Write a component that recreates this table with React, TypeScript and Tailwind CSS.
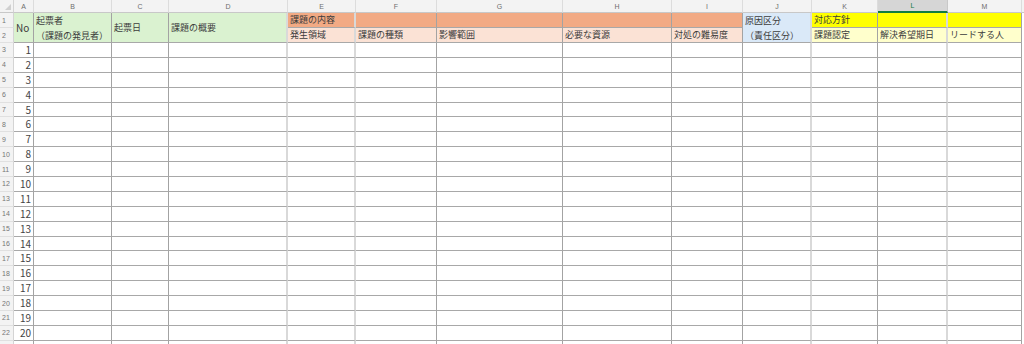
import React from 'react';

type Col = { id: string; line: string };

const DARK = 'border-r border-r-[#a3a3a3]';
const LIGHT = 'border-r-2 border-r-[#d9d9d9]';

const cols: Col[] = [
  { id: 'A', line: DARK },
  { id: 'B', line: DARK },
  { id: 'C', line: DARK },
  { id: 'D', line: LIGHT },
  { id: 'E', line: LIGHT },
  { id: 'F', line: DARK },
  { id: 'G', line: DARK },
  { id: 'H', line: DARK },
  { id: 'I', line: DARK },
  { id: 'J', line: LIGHT },
  { id: 'K', line: DARK },
  { id: 'L', line: LIGHT },
  { id: 'M', line: DARK },
];

const colLine = (id: string) => cols.find(c => c.id === id)!.line;

const RowHead = ({ n }: { n?: number }) => (
  <div className="bg-[#f3f3f3] border-r border-r-[#d4d4d4] border-b border-b-[#e0e0e0] flex items-center pl-[2px] text-[7px] text-[#767676] font-['Liberation_Sans',sans-serif] leading-none">
    {n}
  </div>
);

const Cell = ({ id, className = '', children }: { id: string; className?: string; children?: React.ReactNode }) => (
  <div className={`${colLine(id)} border-b border-b-[#a8a8a8] ${className}`}>{children}</div>
);

const App: React.FC = () => {
  const body = Array.from({ length: 21 }, (_, i) => i);

  return (
    <div className="w-[1024px] h-[344px] overflow-hidden bg-white font-['Noto_Sans_CJK_JP',sans-serif] text-[9px] text-[#3c3c3c]">
      <div className="grid grid-cols-[14px_20px_78px_57px_119px_68px_81px_126px_109px_71px_69px_66px_70px_74px_2px] grid-rows-[13px_15px_15px_repeat(21,14.9px)]">
        {/* column letters */}
        <div className="bg-[#f3f3f3] border-r border-r-[#d4d4d4] border-b border-b-[#c8c8c8] relative">
          <div className="absolute right-[2px] bottom-[2px] w-0 h-0 border-l-[6px] border-l-transparent border-b-[6px] border-b-[#d0d0d0]" />
        </div>
        {cols.map(c =>
          c.id === 'L' ? (
            <div key={c.id} className="bg-[#d6d6d6] border-r border-r-[#c8c8c8] border-b-2 border-b-[#107c41] flex items-center justify-center text-[7px] text-[#107c41] font-['Liberation_Sans',sans-serif] leading-none">
              {c.id}
            </div>
          ) : (
            <div key={c.id} className="bg-[#f3f3f3] border-r border-r-[#dcdcdc] border-b border-b-[#c8c8c8] flex items-center justify-center text-[7px] text-[#6e6e6e] font-['Liberation_Sans',sans-serif] leading-none">
              {c.id}
            </div>
          )
        )}
        <div className="bg-[#f3f3f3] border-b border-b-[#c8c8c8]" />

        {/* row 1 */}
        <RowHead n={1} />
        <Cell id="A" className="row-span-2 bg-[#daf2d0] flex items-center pl-[2px] text-[10px]">No</Cell>
        <Cell id="B" className="row-span-2 bg-[#daf2d0] flex flex-col leading-[15px] pl-[2px]">
          <span>起票者</span>
          <span>（課題の発見者）</span>
        </Cell>
        <Cell id="C" className="row-span-2 bg-[#daf2d0] flex items-center pl-[2px]">起票日</Cell>
        <Cell id="D" className="row-span-2 bg-[#daf2d0] flex items-center pl-[2px]">課題の概要</Cell>
        <Cell id="E" className="bg-[#f2aa84] flex items-center pl-[2px] whitespace-nowrap">課題の内容</Cell>
        <Cell id="F" className="bg-[#f2aa84]" />
        <Cell id="G" className="bg-[#f2aa84]" />
        <Cell id="H" className="bg-[#f2aa84]" />
        <Cell id="I" className="bg-[#f2aa84]" />
        <Cell id="J" className="row-span-2 bg-[#dae9f8] flex flex-col leading-[15px] pl-[2px]">
          <span>原因区分</span>
          <span>（責任区分）</span>
        </Cell>
        <Cell id="K" className="bg-[#ffff00] flex items-center pl-[2px]">対応方針</Cell>
        <Cell id="L" className="bg-[#ffff00]" />
        <Cell id="M" className="bg-[#ffff00]" />
        <div />

        {/* row 2 */}
        <RowHead n={2} />
        <Cell id="E" className="bg-[#fbe2d5] flex items-center pl-[2px] whitespace-nowrap">発生領域</Cell>
        <Cell id="F" className="bg-[#fbe2d5] flex items-center pl-[2px] whitespace-nowrap">課題の種類</Cell>
        <Cell id="G" className="bg-[#fbe2d5] flex items-center pl-[2px] whitespace-nowrap">影響範囲</Cell>
        <Cell id="H" className="bg-[#fbe2d5] flex items-center pl-[2px] whitespace-nowrap">必要な資源</Cell>
        <Cell id="I" className="bg-[#fbe2d5] flex items-center pl-[2px] whitespace-nowrap">対処の難易度</Cell>
        <Cell id="K" className="bg-[#ffffcc] flex items-center pl-[2px] whitespace-nowrap">課題認定</Cell>
        <Cell id="L" className="bg-[#ffffcc] flex items-center pl-[2px] whitespace-nowrap">解決希望期日</Cell>
        <Cell id="M" className="bg-[#ffffcc] flex items-center pl-[2px] whitespace-nowrap">リードする人</Cell>
        <div />

        {/* data rows; the last one is only cut in at the bottom edge */}
        {body.map(i => (
          <React.Fragment key={i}>
            <RowHead n={i < 20 ? i + 3 : undefined} />
            {cols.map(c =>
              c.id === 'A' ? (
                <Cell key={c.id} id="A" className="flex items-center justify-end pr-[2px] text-[10px] leading-none text-[#444]">
                  {i < 20 ? i + 1 : ''}
                </Cell>
              ) : (
                <Cell key={c.id} id={c.id} />
              )
            )}
            <div />
          </React.Fragment>
        ))}
      </div>
    </div>
  );
};

export default App;
